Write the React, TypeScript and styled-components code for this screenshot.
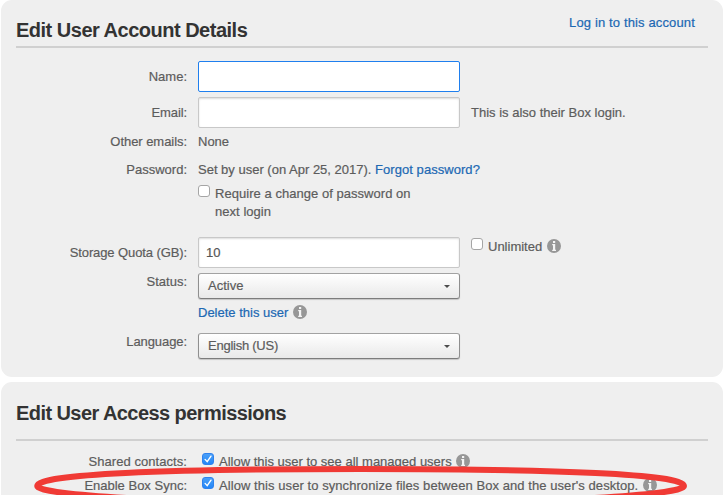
import React from "react";
import styled, { createGlobalStyle } from "styled-components";

const GlobalStyle = createGlobalStyle`
  * { box-sizing: border-box; }
  body {
    margin: 0;
    background: #fff;
    overflow: hidden;
    font: 13px/18px "Liberation Sans", Arial, sans-serif;
    color: #5c5c5c;
    -webkit-text-stroke: 0.2px currentColor;
  }
`;

const Page = styled.main`
  position: relative;
  width: 724px;
  height: 495px;
  overflow: hidden;
  padding: 0 1px;
`;

const Panel = styled.section<{ $height: number }>`
  height: ${(p) => p.$height}px;
  padding: 0 15px;
  margin-bottom: 5px;
  border-radius: 11px;
  background: #efefef;
`;

const PanelHeader = styled.header<{ $height: number; $gap: number }>`
  display: flex;
  justify-content: space-between;
  align-items: flex-end;
  height: ${(p) => p.$height}px;
  margin-bottom: ${(p) => p.$gap}px;
  border-bottom: 2px solid #d0d0d0;
`;

const Title = styled.h2<{ $spacing: number; $bottom: number }>`
  margin: 0 0 ${(p) => p.$bottom}px;
  font-size: 20px;
  line-height: 24px;
  font-weight: 700;
  letter-spacing: ${(p) => p.$spacing}px;
  color: #333;
  -webkit-text-stroke: 0;
`;

const Text = styled.span<{ $spacing?: number }>`
  letter-spacing: ${(p) => p.$spacing ?? 0}px;
  white-space: pre;
`;

const Link = styled.a<{ $spacing?: number }>`
  color: #2068b3;
  letter-spacing: ${(p) => p.$spacing ?? 0}px;
  white-space: nowrap;
`;

const HeaderLink = styled(Link)`
  margin: 0 13px 14px 0;
`;

const Row = styled.div<{ $height: number }>`
  display: grid;
  grid-template-columns: 171px 262px 1fr;
  column-gap: 11px;
  height: ${(p) => p.$height}px;
`;

const Label = styled.label<{ $top?: number; $spacing?: number }>`
  padding-top: ${(p) => p.$top ?? 0}px;
  text-align: right;
  white-space: nowrap;
  letter-spacing: ${(p) => p.$spacing ?? 0}px;
`;

const Note = styled.div<{ $top: number }>`
  display: flex;
  align-items: flex-start;
  padding-top: ${(p) => p.$top}px;
`;

const Line = styled.div<{ $top?: number; $left?: number }>`
  display: flex;
  align-items: flex-start;
  white-space: nowrap;
  margin: ${(p) => p.$top ?? 0}px 0 0 ${(p) => p.$left ?? 0}px;
`;

const Input = styled.input<{ $active?: boolean }>`
  display: block;
  width: 262px;
  height: 31px;
  padding: 0 7px;
  border: 1px solid ${(p) => (p.$active ? "#1f7fee" : "#c8c8c8")};
  border-radius: 2px;
  outline: none;
  background: #fff;
  box-shadow: ${(p) => (p.$active ? "none" : "inset 0 1px 2px rgba(0, 0, 0, 0.14)")};
  font: inherit;
  color: #555;
`;

const Select = styled.div`
  display: flex;
  align-items: center;
  justify-content: space-between;
  height: 26px;
  padding: 0 9px;
  border: 1px solid #8f8f8f;
  border-top-color: #a2a2a2;
  border-bottom-color: #7c7c7c;
  border-radius: 3px;
  background: linear-gradient(#fff, #e9e9e9);
  box-shadow: 0 1px 1px rgba(0, 0, 0, 0.18);
`;

const Caret = styled.span`
  border: 3px solid transparent;
  border-top-color: #4c4c4c;
  border-bottom: 0;
  margin-top: 1px;
`;

const Box = styled.span<{ $checked?: boolean }>`
  flex: none;
  display: block;
  width: 12px;
  height: 12px;
  margin-right: 5px;
  border: 1px solid ${(p) => (p.$checked ? "#2f82ee" : "#a5a5a5")};
  border-radius: 3px;
  background: ${(p) => (p.$checked ? "linear-gradient(#4ba0f8, #2386f7)" : "#fff")};
  svg { display: block; margin: -1px; }
`;

const InfoSvg = styled.svg<{ $left?: number }>`
  flex: none;
  display: block;
  margin: 1px 0 0 ${(p) => p.$left ?? 5}px;
`;

const Highlight = styled.svg`
  position: absolute;
  left: 0;
  top: 455px;
  pointer-events: none;
`;

const Info = ({ left }: { left?: number }) => (
  <InfoSvg $left={left} width="14" height="14" viewBox="0 0 14 14">
    <circle cx="7" cy="7" r="7" fill="#979797" />
    <path d="M6 2h2.2v2H6zM5.2 5h3v5.8h.8v1.2H5.2v-1.2H6V6.2h-.8z" fill="#f4f4f4" />
  </InfoSvg>
);

const Checkbox = ({ checked }: { checked?: boolean }) => (
  <Box $checked={checked}>
    {checked && (
      <svg width="12" height="12" viewBox="0 0 12 12">
        <path d="M3.1 6.4 5.2 8.7 9 3.2" fill="none" stroke="#fff" strokeWidth="1.4" strokeLinecap="round" />
      </svg>
    )}
  </Box>
);

export default function App() {
  return (
    <>
      <GlobalStyle />
      <Page>
        <Panel $height={377}>
          <PanelHeader $height={48} $gap={13}>
            <Title $bottom={4} $spacing={-0.5}>Edit User Account Details</Title>
            <HeaderLink $spacing={0.14}>Log in to this account</HeaderLink>
          </PanelHeader>
          <Row $height={36}>
            <Label $top={7}>Name:</Label>
            <Input $active aria-label="Name" />
          </Row>
          <Row $height={36}>
            <Label $top={7} $spacing={-0.1}>Email:</Label>
            <Input aria-label="Email" />
            <Note $top={7}><Text>This is also their Box login.</Text></Note>
          </Row>
          <Row $height={28}>
            <Label $spacing={-0.05}>Other emails:</Label>
            <Text>None</Text>
          </Row>
          <Row $height={76}>
            <Label>Password:</Label>
            <div>
              <Line>
                <Text>Set by user (on Apr 25, 2017). </Text>
                <Link $spacing={0.05}>Forgot password?</Link>
              </Line>
              <Line $top={6}>
                <Checkbox />
                <Text $spacing={0.04}>{"Require a change of password on\nnext login"}</Text>
              </Line>
            </div>
          </Row>
          <Row $height={36}>
            <Label $top={7} $spacing={-0.1}>Storage Quota (GB):</Label>
            <Input defaultValue="10" aria-label="Storage quota" />
            <Note $top={1}>
              <Checkbox />
              <Text>Unlimited</Text>
              <Info />
            </Note>
          </Row>
          <Row $height={60}>
            <Label>Status:</Label>
            <div>
              <Select><Text>Active</Text><Caret /></Select>
              <Line $top={5}>
                <Link>Delete this user</Link>
                <Info />
              </Line>
            </div>
          </Row>
          <Row $height={36}>
            <Label $spacing={-0.08}>Language:</Label>
            <Select><Text $spacing={-0.25}>English (US)</Text><Caret /></Select>
          </Row>
        </Panel>
        <Panel $height={130}>
          <PanelHeader $height={59} $gap={12}>
            <Title $bottom={14} $spacing={-0.57}>Edit User Access permissions</Title>
          </PanelHeader>
          <Row $height={24}>
            <Label $spacing={0.06}>Shared contacts:</Label>
            <Line $left={4}>
              <Checkbox checked />
              <Text>Allow this user to see all managed users</Text>
              <Info left={4} />
            </Line>
          </Row>
          <Row $height={24}>
            <Label>Enable Box Sync:</Label>
            <Line $left={4}>
              <Checkbox checked />
              <Text $spacing={0.068}>Allow this user to synchronize files between Box and the user's desktop.</Text>
              <Info />
            </Line>
          </Row>
        </Panel>
        <Highlight width="724" height="64" viewBox="0 455 724 64">
          <path
            d="M37.2 486C37.2 474 165 469 360.5 469S684 474 684 486C684 495.5 539 503.5 360.5 503.5S37.2 495.5 37.2 486Z"
            fill="none"
            stroke="#f03a35"
            strokeWidth="6"
          />
        </Highlight>
      </Page>
    </>
  );
}
